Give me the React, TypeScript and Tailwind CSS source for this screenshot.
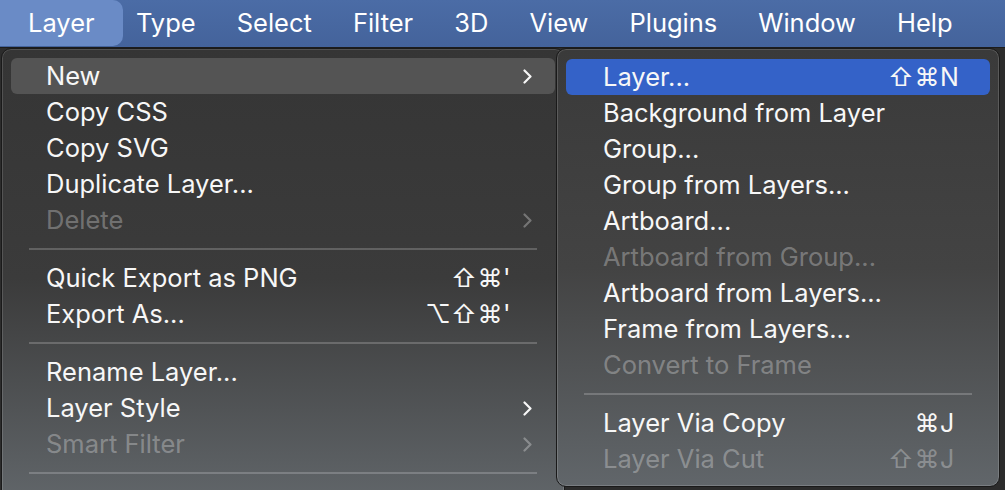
import React from 'react';

type Item =
  | { sep: true }
  | {
      label: string;
      mods?: string[];
      keyChar?: string;
      sub?: boolean;
      disabled?: boolean;
      active?: boolean;
    };

const topMenus = ['Type', 'Select', 'Filter', '3D', 'View', 'Plugins', 'Window', 'Help'];

const layerItems: Item[] = [
  { label: 'New', sub: true, active: true },
  { label: 'Copy CSS' },
  { label: 'Copy SVG' },
  { label: 'Duplicate Layer...' },
  { label: 'Delete', sub: true, disabled: true },
  { sep: true },
  { label: 'Quick Export as PNG', mods: ['⇧', '⌘'], keyChar: "'" },
  { label: 'Export As...', mods: ['⌥', '⇧', '⌘'], keyChar: "'" },
  { sep: true },
  { label: 'Rename Layer...' },
  { label: 'Layer Style', sub: true },
  { label: 'Smart Filter', sub: true, disabled: true },
  { sep: true },
];

const newItems: Item[] = [
  { label: 'Layer...', mods: ['⇧', '⌘'], keyChar: 'N', active: true },
  { label: 'Background from Layer' },
  { label: 'Group...' },
  { label: 'Group from Layers...' },
  { label: 'Artboard...' },
  { label: 'Artboard from Group...', disabled: true },
  { label: 'Artboard from Layers...' },
  { label: 'Frame from Layers...' },
  { label: 'Convert to Frame', disabled: true },
  { sep: true },
  { label: 'Layer Via Copy', mods: ['⌘'], keyChar: 'J' },
  { label: 'Layer Via Cut', mods: ['⇧', '⌘'], keyChar: 'J', disabled: true },
];

function Chevron() {
  return (
    <svg width="9" height="15" viewBox="0 0 9 15" fill="none">
      <path d="M1.5 1.5L7.5 7.5L1.5 13.5" stroke="currentColor" strokeWidth="2.2" strokeLinecap="round" strokeLinejoin="round" />
    </svg>
  );
}

function Shortcut({ mods = [], keyChar }: { mods?: string[]; keyChar?: string }) {
  if (!keyChar) return null;
  return (
    <div className="flex items-center text-[25px]">
      {mods.map((m, i) => (
        <span key={i} className="w-[26px] text-center">
          {m}
        </span>
      ))}
      <span className="w-[20px] text-left">{keyChar}</span>
    </div>
  );
}

function MenuList({ items, arrows, activeBg }: { items: Item[]; arrows: boolean; activeBg: string }) {
  return (
    <div className="flex flex-col">
      {items.map((item, i) => {
        if ('sep' in item) {
          return (
            <div key={i} className="h-[22px] flex items-center px-[27px]">
              <div className="h-[2px] w-full bg-white/20" />
            </div>
          );
        }
        return (
          <div
            key={i}
            className={`mx-[9px] h-[36px] rounded-[6px] flex items-center ${arrows ? 'pl-[35px] pr-[23px]' : 'pl-[37px] pr-[30px]'} ${
              item.active ? activeBg : ''
            } ${item.disabled ? 'text-white/30' : 'text-[#f7f7f7]'}`}
          >
            <span className="flex-1 whitespace-nowrap">{item.label}</span>
            <Shortcut mods={item.mods} keyChar={item.keyChar} />
            {arrows && (
              <span className="w-[9px] flex items-center">{item.sub && <Chevron />}</span>
            )}
          </div>
        );
      })}
    </div>
  );
}

export default function App() {
  return (
    <div
      className="relative w-[1005px] h-[490px] overflow-hidden bg-[#2c2c2c] text-[25.5px] leading-[1.2] text-white"
      style={{ fontFamily: 'Inter, "DejaVu Sans", sans-serif' }}
    >
      <div className="h-[47px] flex items-center bg-linear-to-b from-[#4b6ca6] to-[#44639b] border-b border-[#1c1c1c] box-content">
        <div className="h-[46px] w-[123px] self-start flex items-center pl-[28px] bg-[#6a8bc6] rounded-r-[10px]">
          Layer
        </div>
        <div className="flex items-center gap-[41px] pl-[13px]">
          {topMenus.map((m) => (
            <span key={m}>{m}</span>
          ))}
        </div>
      </div>

      <div className="ml-[1px] w-[564px] h-[460px] rounded-t-[10px] border border-[#1a1a1a] shadow-[inset_0_0_0_1px_rgba(255,255,255,0.14)] bg-linear-to-b from-[#353535] via-[#3b3b3b] to-[#62676b] pt-[9px]">
        <MenuList items={layerItems} arrows activeBg="bg-[#545454]" />
      </div>

      <div className="absolute left-[556px] top-[48px] w-[444px] h-[439px] rounded-[10px] border border-[#1a1a1a] shadow-[inset_0_0_0_1px_rgba(255,255,255,0.16)] bg-linear-to-b from-[#3a3a3a] via-[#434343] to-[#61666a] pt-[10px]">
        <MenuList items={newItems} arrows={false} activeBg="bg-[#3462c8]" />
      </div>
    </div>
  );
}
